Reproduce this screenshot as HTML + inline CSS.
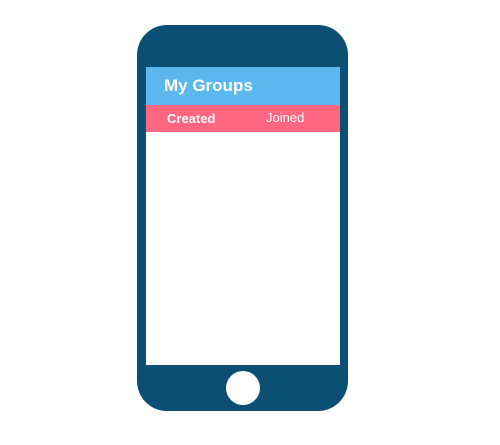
<!DOCTYPE html>
<html><head><style>
html,body{margin:0;padding:0;width:500px;height:445px;background:#fff;overflow:hidden;font-family:"Liberation Sans",sans-serif}
.phone{position:absolute;left:137px;top:25px;width:211px;height:386px;background:#0b4f75;border-radius:30px}
.screen{position:absolute;left:146px;top:67px;width:194px;height:298px;background:#fff}
.hdr{position:absolute;left:146px;top:67px;width:194px;height:38px;background:#5bb7ee}
.hdr span{position:absolute;left:18px;top:9px;color:#fff;font-size:17px;font-weight:bold}
.tabs{position:absolute;left:146px;top:105px;width:194px;height:27px;background:#ff6680;color:#fff;font-size:13px}
.t1{position:absolute;left:21px;top:6px;font-weight:bold}
.t2{position:absolute;left:120px;top:5px}
.home{position:absolute;left:226px;top:371px;width:34px;height:34px;border-radius:50%;background:#fff}
</style></head><body>
<div class="phone"></div>
<div class="screen"></div>
<div class="hdr"><span>My Groups</span></div>
<div class="tabs"><span class="t1">Created</span><span class="t2">Joined</span></div>
<div class="home"></div>
</body></html>
